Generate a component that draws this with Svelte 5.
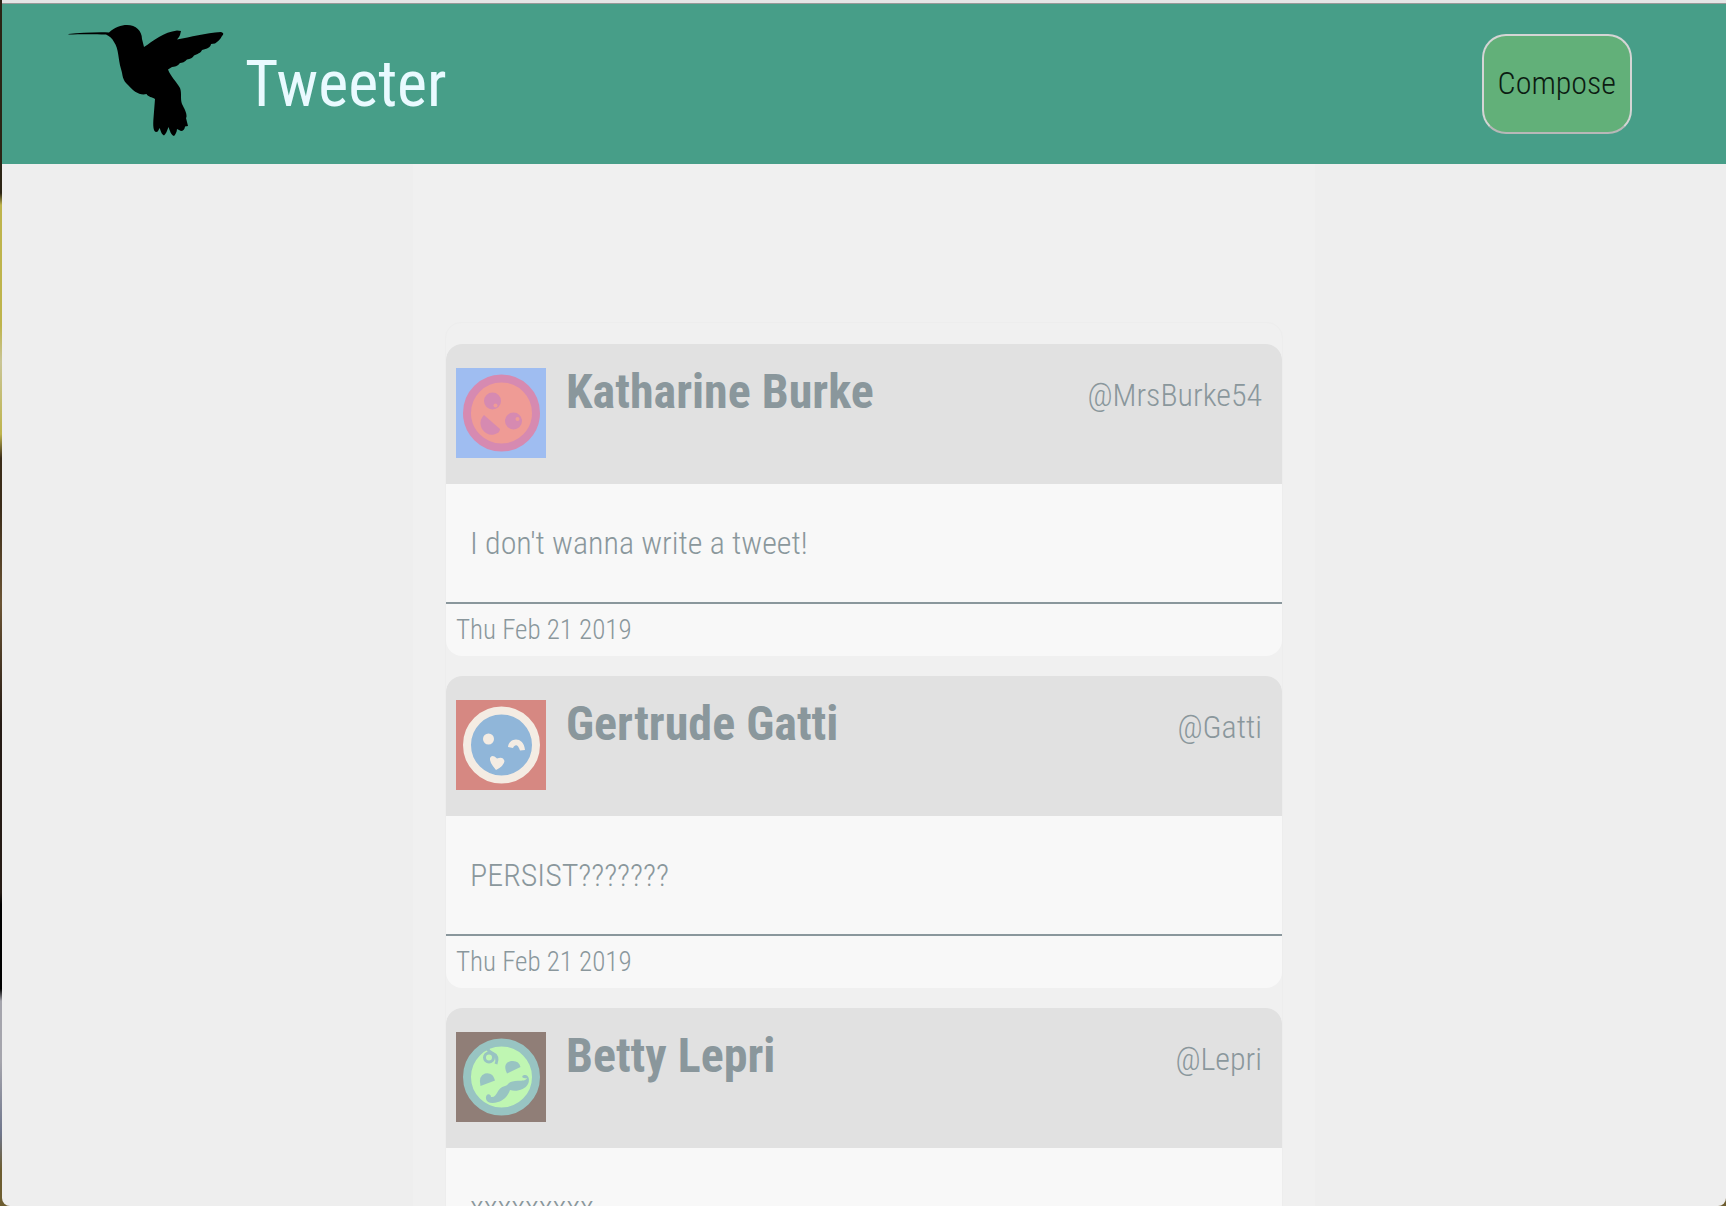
<script>
  const tweets = [
    { name: 'Katharine Burke', handle: '@MrsBurke54', text: "I don't wanna write a tweet!", date: 'Thu Feb 21 2019', face: 'smile' },
    { name: 'Gertrude Gatti', handle: '@Gatti', text: 'PERSIST???????', date: 'Thu Feb 21 2019', face: 'wink' },
    { name: 'Betty Lepri', handle: '@Lepri', text: 'xxxxxxxxx', date: 'Thu Feb 21 2019', face: 'moustache' }
  ];
</script>

<div class="desktop">
  <div class="window">
    <header class="topbar">
      <svg class="bird" viewBox="68 23 157 113" aria-hidden="true">
        <path d="M68.5 33 C80 32 95 31 109 31.5 C115 26 121 24 127 24 C136 24 142 30 142 38 L144 46 C153 40 164 31 177 29.500 L181 30 L180 34 L179 36 L177 38.500 C191 36 205 32 221 31 Q225 32 222 35 C220 39 217 41 215 42.500 L211 43 C211 46 207 48 202 49 C201 52 197 53 194 54.500 C193 57 190 58 187 58.500 C185 61 182 62 180 62 C178 65 174 66 172 66 L168 68.500 C171 76 176 80 180 87 C182 92 180 98 182 103 C184 107 187 112 186.500 116 L186 117 L188 125 L185 125.500 C185 128 183 130 181 130 L177 128 C177 131 175 134 174 135 C171 134 170 130 168.500 126 C167 130 166 133 164 134.500 C161 133 161 130 159.500 127 C158 130 158 131 156 131 C153 130 153 124 153.500 117 L155 98 C152 96 148 96 146.500 93 C140 95 133 90 128 84 C122 79 123 74 121 68 C118 58 119 48 114 41 C112 37 109 35 106 33.500 C95 33 80 33 68.500 33.500 Z" />
      </svg>
      <h1>Tweeter</h1>
      <button class="compose" type="button">Compose</button>
    </header>

    <main class="page">
      <section class="feed" aria-label="Tweets">
        {#each tweets as tweet}
          <article class="tweet">
            <header>
              <svg class="avatar" viewBox="0 0 90 90" aria-hidden="true">
                {#if tweet.face === 'smile'}
                  <rect width="90" height="90" fill="#9fbdf1" />
                  <circle cx="45.500" cy="45" r="34.500" fill="#ef9b95" stroke="#d68ab1" stroke-width="8" />
                  <g fill="#d68ab1">
                    <circle cx="36.500" cy="33" r="8.500" />
                    <circle cx="57.500" cy="53" r="8.500" />
                    <path d="M28 47 L44 61 Q44 65 38 66.500 Q31 68 26 61 Q22 53 28 47Z" />
                  </g>
                  <circle cx="39.500" cy="37.500" r="2" fill="#ef9b95" />
                  <circle cx="61.500" cy="51" r="2" fill="#ef9b95" />
                {:else if tweet.face === 'wink'}
                  <rect width="90" height="90" fill="#d68882" />
                  <circle cx="45.500" cy="45" r="34.500" fill="#90b6d9" stroke="#f4ece3" stroke-width="8" />
                  <g fill="#f4ece3">
                    <circle cx="32.500" cy="39" r="5.500" />
                    <path d="M40 70 Q33 62 34 58 Q36 54 41 58.500 Q47 56 48.500 61 Q48 66 40 70Z" />
                    <path d="M52 47 C53 37 68 36 69 50 L64 50.500 C62 44 59 44 57 48Z" />
                  </g>
                {:else}
                  <rect width="90" height="90" fill="#907e77" />
                  <circle cx="45.500" cy="45" r="34.500" fill="#bff6b2" stroke="#98c4c2" stroke-width="8" />
                  <g fill="#98c4c2">
                    <path d="M24.500 54 Q22 44 29 41.500 Q37 40 39 48.500Z" />
                    <path d="M51 41.500 Q46 31 55 29 Q63 28 64.500 35Z" />
                    <path d="M30 67 C29 61 35 61 35 65 C42 66 40 56 49 54 C53 53 51 50 59 49 C65 48 69 50 71 46 C66 47 65 44 68 43 C73 42 74 48 72 52 C69 58 60 60 54 58 C52 64 47 69 42 70 C36 72 31 71 30 67Z" />
                  </g>
                  <g fill="none" stroke="#98c4c2" stroke-width="3">
                    <circle cx="33" cy="25.500" r="4.500" />
                    <path d="M31 16 Q33 20 36 21 Q43 24 40 32" />
                  </g>
                {/if}
              </svg>
              <h2>{tweet.name}</h2>
              <span class="handle">{tweet.handle}</span>
            </header>
            <p>{tweet.text}</p>
            <footer><time datetime="2019-02-21">{tweet.date}</time></footer>
          </article>
        {/each}
      </section>
    </main>
  </div>
</div>

<style>
  :global(body) {
    margin: 0;
  }

  .desktop {
    box-sizing: border-box;
    height: 100vh;
    padding-left: 2px;
    background: linear-gradient(#2b2415 0 16%, #beb44c 17% 27%, #c9c596 30%, #beb44c 36%, #3a2b18 38% 42%, #6b5434 50%, #241a14 60% 74%, #000 75% 82%, #a5a5ad 83% 88%, #6f768c 94%, #6d5d30 97%);
  }

  .window {
    display: flex;
    flex-direction: column;
    height: 100%;
    box-sizing: border-box;
    overflow: hidden;
    border-top: 3px solid #e5e5e5;
    border-radius: 0 0 8px 8px;
    background: #eee;
    color: #8a979c;
    font-family: 'Roboto Condensed', Roboto, sans-serif;
    font-size: 32px;
    font-weight: 300;
  }

  .topbar {
    display: flex;
    flex: none;
    align-items: center;
    box-sizing: border-box;
    height: 161px;
    padding: 0 94px 0 66px;
    border-top: 1px solid #999;
    background: #479e88;
  }

  .bird {
    width: 157px;
    height: 113px;
    margin-bottom: 8px;
  }

  h1 {
    margin: 0 auto 0 20px;
    color: #e9faff;
    font-size: 64px;
    font-weight: 400;
  }

  .compose {
    height: 100px;
    padding: 0 14px 2px;
    border: 2px solid #d5d5d5;
    border-bottom-color: #b8b8b8;
    border-radius: 24px;
    background: #62b079;
    color: #0c1c12;
    font: inherit;
  }

  .page {
    flex: 1;
    box-sizing: border-box;
    width: 100%;
    max-width: 902px;
    margin: 0 auto;
    padding: 158px 32px 0;
    overflow: auto;
    scrollbar-width: none;
    background: #f0f0f0;
  }

  .feed {
    display: flex;
    flex-direction: column;
    gap: 20px;
    padding-top: 21px;
    border: 1px solid #ededed;
    border-radius: 16px;
  }

  .tweet {
    overflow: hidden;
    border-radius: 16px;
    background: #f8f8f8;
  }

  .tweet header {
    display: flex;
    align-items: flex-start;
    box-sizing: border-box;
    height: 140px;
    padding: 24px 20px 0 10px;
    background: #e1e1e1;
  }

  .avatar {
    flex: none;
    width: 90px;
    height: 90px;
  }

  h2 {
    margin: 0 auto 0 20px;
    font-size: 48px;
    font-weight: 700;
    line-height: 48px;
  }

  .handle {
    line-height: 54px;
  }

  p {
    margin: 0;
    padding: 40px 24px;
    line-height: 38px;
  }

  footer {
    padding: 10px;
    border-top: 2px solid #8a979c;
    font-size: 27px;
    line-height: 32px;
  }
</style>
